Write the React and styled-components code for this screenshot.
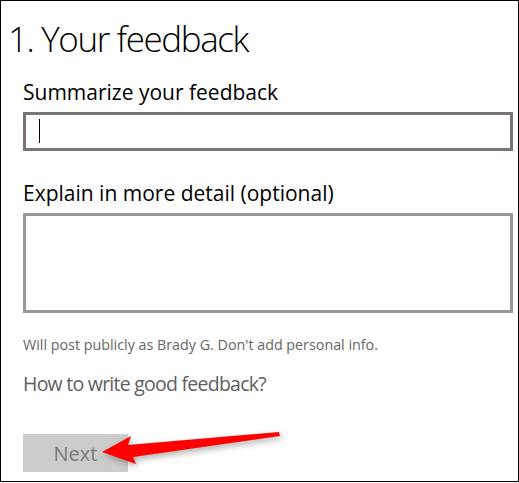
import React from "react";
import styled, { createGlobalStyle } from "styled-components";

const Global = createGlobalStyle`
  html, body { margin: 0; padding: 0; background: #fff; }
  body { font-family: "Open Sans", "Noto Sans", sans-serif; }
  * { box-sizing: border-box; }
`;

const Frame = styled.div`
  width: 519px;
  height: 482px;
  border: 1px solid #000;
  padding: 18px 0 0 7px;
  display: flex;
  flex-direction: column;
  background: #fff;
`;

const Title = styled.h1`
  margin: 0;
  font-size: 35px;
  line-height: 40px;
  letter-spacing: -1.4px;
  font-weight: 300;
  color: #000;
`;

const Form = styled.div`
  display: flex;
  flex-direction: column;
  padding-left: 15px;
  width: 505px;
`;

const Label = styled.div`
  margin-top: ${(p) => p.$gap}px;
  font-size: 21px;
  line-height: 24px;
  color: #000;
`;

const TextBox = styled.div`
  margin-top: 8px;
  height: ${(p) => p.$h}px;
  border: 3px solid ${(p) => p.$border};
  background: #fff;
  padding: 4px 13px;
  display: flex;
  align-items: flex-start;
`;

const Caret = styled.span`
  width: 1px;
  height: 24px;
  background: #000;
`;

const Note = styled.div`
  margin-top: 22px;
  font-size: 14.3px;
  line-height: 20px;
  color: #666;
`;

const Link = styled.div`
  margin-top: 17px;
  font-size: 19.5px;
  line-height: 24px;
  letter-spacing: -0.75px;
  color: #606060;
`;

const ButtonRow = styled.div`
  position: relative;
  margin-top: 38px;
  display: flex;
`;

const NextButton = styled.button`
  width: 105px;
  height: 38px;
  border: none;
  background: #cccccc;
  color: #7a7a7a;
  font-family: inherit;
  font-size: 20px;
  padding: 0;
`;

const Arrow = styled.svg`
  position: absolute;
  left: 0;
  top: 0;
  overflow: visible;
  filter: drop-shadow(2px 3px 3px rgba(0, 0, 0, 0.3));
`;

export default function App() {
  return (
    <>
      <Global />
      <Frame>
        <Title>1. Your feedback</Title>
        <Form>
          <Label $gap={21}>Summarize your feedback</Label>
          <TextBox $h={39} $border="#7a7574">
            <Caret />
          </TextBox>
          <Label $gap={30}>Explain in more detail (optional)</Label>
          <TextBox $h={100} $border="#999999" />
          <Note>Will post publicly as Brady G. Don't add personal info.</Note>
          <Link>How to write good feedback?</Link>
          <ButtonRow>
            <NextButton disabled>Next</NextButton>
            <Arrow width="300" height="40" viewBox="0 0 300 40">
              <polygon
                points="79,18 108,2 105,11 256,-2 257,2 110,23 113,30"
                fill="#ff0000"
              />
            </Arrow>
          </ButtonRow>
        </Form>
      </Frame>
    </>
  );
}
